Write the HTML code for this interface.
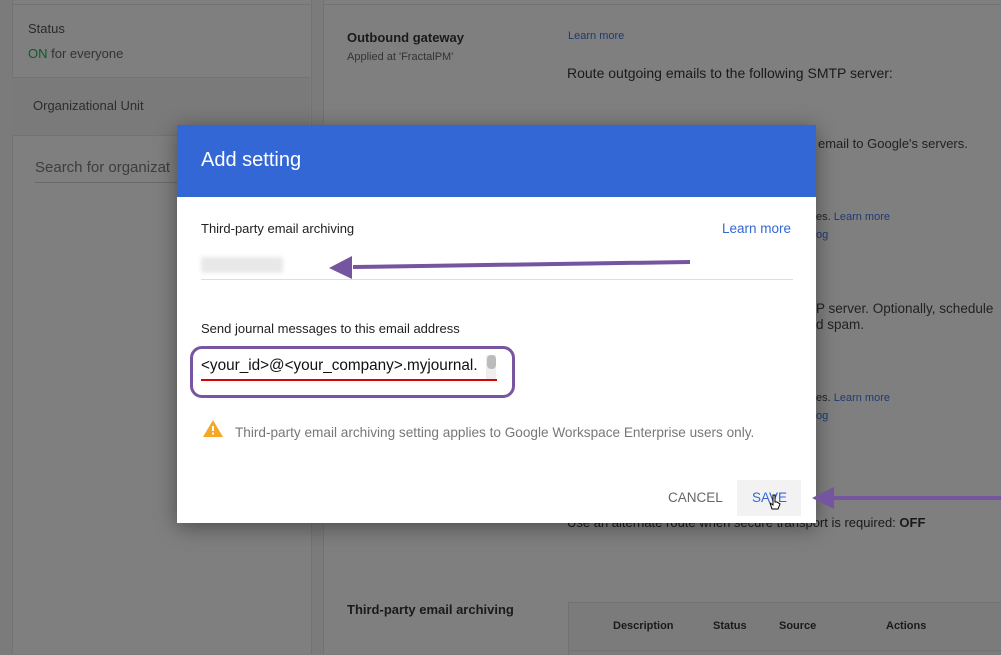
<!DOCTYPE html><html style="background:#7b7b7b"><head><style>
html,body{margin:0;padding:0}
body{width:1001px;height:654px;background:#7b7b7b;font-family:"Liberation Sans",sans-serif;position:relative;overflow:hidden}
.a{position:absolute;white-space:nowrap}
</style></head><body>
<div class="a" style="left:0;top:0;width:1001px;height:654px;background:#7b7b7b"></div>
<div class="a" style="left:12px;top:0;width:298px;height:654px;background:#7f7f7f;border-left:1px solid #737373;border-right:1px solid #737373"></div>
<div class="a" style="left:12px;top:4px;width:298px;height:1px;background:#737373"></div>
<div class="a" style="left:12px;top:77px;width:298px;height:57px;background:#7a7a7a;border-top:1px solid #737373;border-bottom:1px solid #737373"></div>
<div class="a" style="left:28px;top:21px;font-size:13px;color:#2a2a2a">Status</div>
<div class="a" style="left:28px;top:46px;font-size:13px;color:#333"><span style="color:#0d5a2c">ON</span> for everyone</div>
<div class="a" style="left:33px;top:98px;font-size:13px;color:#2d2d2d">Organizational Unit</div>
<div class="a" style="left:35px;top:159px;font-size:15px;color:#3d3d3d">Search for organizat</div>
<div class="a" style="left:35px;top:182px;width:150px;height:1px;background:#6a6a6a"></div>
<div class="a" style="left:323px;top:0;width:678px;height:654px;background:#7f7f7f;border-left:1px solid #737373"></div>
<div class="a" style="left:323px;top:4px;width:678px;height:1px;background:#737373"></div>
<div class="a" style="left:347px;top:30px;font-size:13px;font-weight:bold;color:#1a1a1a">Outbound gateway</div>
<div class="a" style="left:347px;top:51px;font-size:11px;color:#333">Applied at 'FractalPM'</div>
<div class="a" style="left:568px;top:30px;font-size:11px;color:#1d3a75">Learn more</div>
<div class="a" style="left:567px;top:65px;font-size:14px;color:#1a1a1a">Route outgoing emails to the following SMTP server:</div>
<div class="a" style="left:818px;top:136px;font-size:13px;color:#222">email to Google's servers.</div>
<div class="a" style="left:816px;top:211px;font-size:11px;color:#222">es. <span style="color:#1d3a75">Learn more</span></div>
<div class="a" style="left:816px;top:229px;font-size:11px;color:#1d3a75">og</div>
<div class="a" style="left:816px;top:301px;font-size:13.5px;color:#222">P server. Optionally, schedule</div>
<div class="a" style="left:816px;top:317px;font-size:13.5px;color:#222">d spam.</div>
<div class="a" style="left:816px;top:392px;font-size:11px;color:#222">es. <span style="color:#1d3a75">Learn more</span></div>
<div class="a" style="left:816px;top:410px;font-size:11px;color:#1d3a75">og</div>
<div class="a" style="left:567px;top:515px;font-size:13px;color:#1a1a1a">Use an alternate route when secure transport is required: <b>OFF</b></div>
<div class="a" style="left:347px;top:602px;font-size:13px;font-weight:bold;color:#1a1a1a">Third-party email archiving</div>
<div class="a" style="left:568px;top:602px;width:433px;height:52px;border-top:1px solid #727272;border-left:1px solid #727272;background:#7b7b7b"></div>
<div class="a" style="left:568px;top:650px;width:433px;height:1px;background:#727272"></div>
<div class="a" style="left:613px;top:620px;font-size:11px;font-weight:bold;color:#1a1a1a">Description</div>
<div class="a" style="left:713px;top:620px;font-size:11px;font-weight:bold;color:#1a1a1a">Status</div>
<div class="a" style="left:779px;top:620px;font-size:11px;font-weight:bold;color:#1a1a1a">Source</div>
<div class="a" style="left:886px;top:620px;font-size:11px;font-weight:bold;color:#1a1a1a">Actions</div>

<div class="a" style="left:177px;top:125px;width:639px;height:398px;background:#fff;box-shadow:0 4px 20px rgba(0,0,0,.4)"></div>
<div class="a" style="left:177px;top:125px;width:639px;height:72px;background:#3367d6"></div>
<div class="a" style="left:201px;top:149px;font-size:20px;color:#fff">Add setting</div>
<div class="a" style="left:201px;top:221px;font-size:13px;color:#222">Third-party email archiving</div>
<div class="a" style="left:722px;top:221px;font-size:13.5px;color:#3367d6">Learn more</div>
<div class="a" style="left:201px;top:257px;width:82px;height:16px;background:#e8e8e8;filter:blur(2px)"></div>
<div class="a" style="left:201px;top:279px;width:592px;height:1px;background:#ddd"></div>
<div class="a" style="left:201px;top:321px;font-size:13px;color:#222">Send journal messages to this email address</div>
<div class="a" style="left:190px;top:346px;width:319px;height:46px;border:3px solid #7755a0;border-radius:12px"></div>
<div class="a" style="left:201px;top:357px;font-size:15.3px;color:#111">&lt;your_id&gt;@&lt;your_company&gt;.myjournal.</div>
<div class="a" style="left:486px;top:355px;width:10px;height:24px;background:#eee"></div>
<div class="a" style="left:487px;top:355px;width:9px;height:14px;background:#bbb;border-radius:4px"></div>
<div class="a" style="left:201px;top:379px;width:296px;height:2px;background:#d00"></div>
<svg class="a" style="left:202px;top:419px" width="22" height="19"><path d="M11 1L21 18H1Z" fill="#f4a825"/><rect x="10" y="7" width="2" height="5" fill="#fff"/><rect x="10" y="13.5" width="2" height="2" fill="#fff"/></svg>
<div class="a" style="left:235px;top:425px;font-size:13.6px;color:#777">Third-party email archiving setting applies to Google Workspace Enterprise users only.</div>
<div class="a" style="left:668px;top:490px;font-size:13.5px;color:#666">CANCEL</div>
<div class="a" style="left:737px;top:480px;width:64px;height:36px;background:#f2f2f2"></div>
<div class="a" style="left:752px;top:490px;font-size:13.5px;color:#3367d6">SAVE</div>
<svg class="a" style="left:0;top:0" width="1001" height="654">
<path d="M353 267L690 262" stroke="#7554a0" stroke-width="4"/>
<path d="M329 268L352 256L352 279Z" fill="#7554a0"/>
<path d="M830 498L1001 498" stroke="#7554a0" stroke-width="4"/>
<path d="M812 498L834 487L834 509Z" fill="#7554a0"/>
<path d="M773 495l0 10l-3-2l2 6h6l2-5l-3-2l-2 0l0-7z" fill="#fff" stroke="#000" stroke-width="1"/>
</svg>
</body></html>
